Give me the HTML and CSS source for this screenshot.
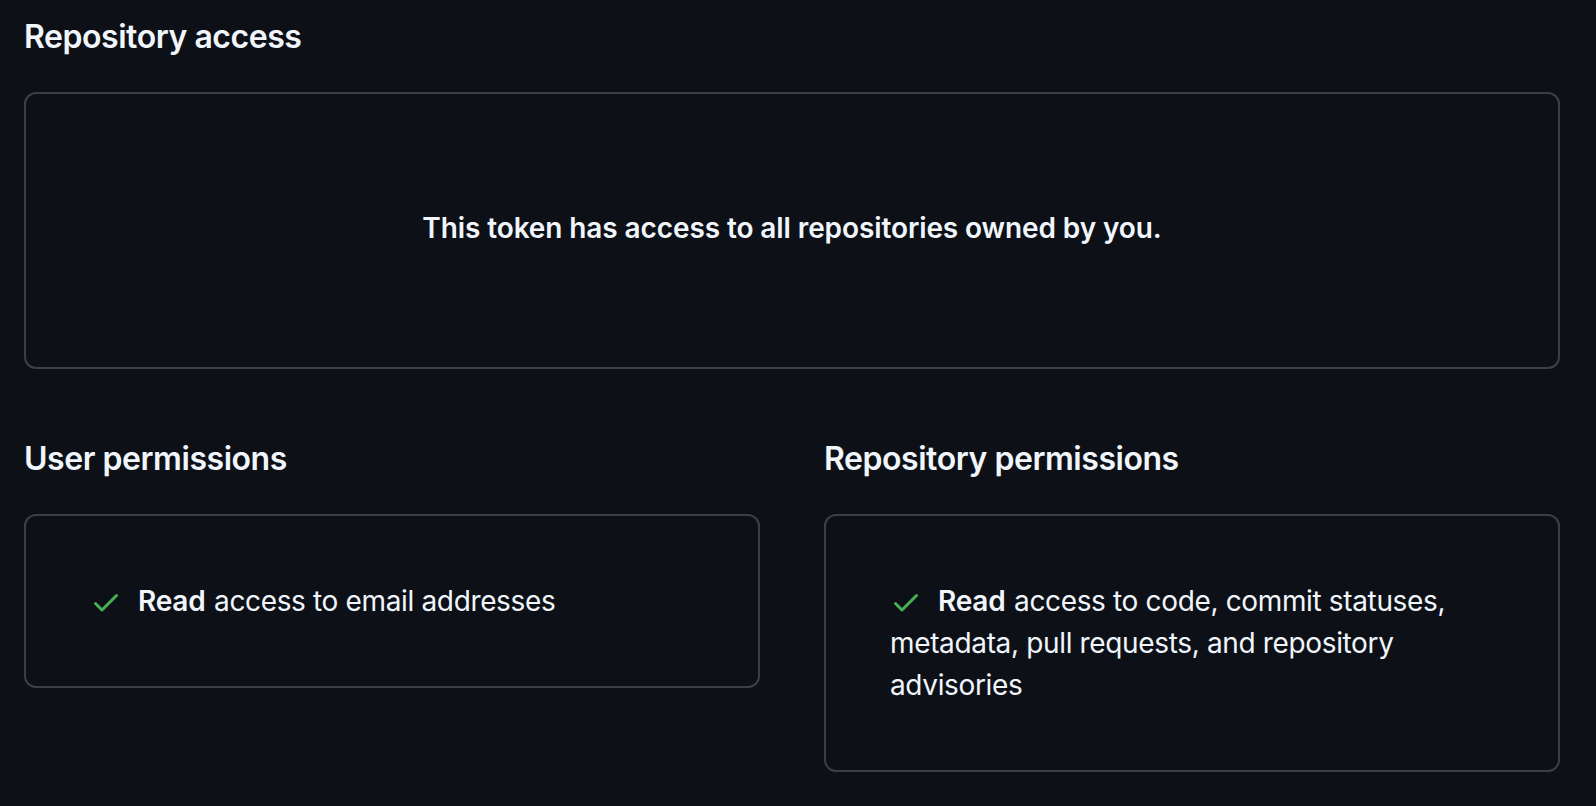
FILE: index.html
```html
<!DOCTYPE html>
<html lang="en">
<head>
<meta charset="utf-8">
<title>Token access</title>
<link rel="stylesheet" href="styles.css">
</head>
<body>
<main class="page">
  <section class="section">
    <h2 class="heading">Repository access</h2>
    <div class="box box-center">
      <p class="notice">This token has access to all repositories owned by you.</p>
    </div>
  </section>
  <div class="columns">
    <section class="section">
      <h2 class="heading">User permissions</h2>
      <div class="box">
        <p class="perm"><svg class="check" viewBox="0 0 16 16" width="32" height="32" aria-hidden="true"><path d="M13.78 4.22a.75.75 0 0 1 0 1.06l-7.25 7.25a.75.75 0 0 1-1.06 0L2.22 9.28a.751.751 0 0 1 .018-1.042.751.751 0 0 1 1.042-.018L6 10.94l6.72-6.72a.75.75 0 0 1 1.06 0Z"/></svg><strong>Read</strong> access to email addresses</p>
      </div>
    </section>
    <section class="section">
      <h2 class="heading">Repository permissions</h2>
      <div class="box">
        <p class="perm"><svg class="check" viewBox="0 0 16 16" width="32" height="32" aria-hidden="true"><path d="M13.78 4.22a.75.75 0 0 1 0 1.06l-7.25 7.25a.75.75 0 0 1-1.06 0L2.22 9.28a.751.751 0 0 1 .018-1.042.751.751 0 0 1 1.042-.018L6 10.94l6.72-6.72a.75.75 0 0 1 1.06 0Z"/></svg><strong>Read</strong> access to code, commit statuses, metadata, pull requests, and repository advisories</p>
      </div>
    </section>
  </div>
</main>
</body>
</html>
```
FILE: styles.css
```css
html, body {
  margin: 0;
  padding: 0;
  background: #0d1117;
}
body {
  color: #f0f6fc;
  font-family: Inter, "Liberation Sans", sans-serif;
  font-size: 28px;
  line-height: 42px;
}
.page {
  width: 1536px;
  padding: 12px 0 0 24px;
  display: flex;
  flex-direction: column;
  gap: 65px;
}
.section {
  display: flex;
  flex-direction: column;
  gap: 31px;
}
.heading {
  margin: 0;
  padding-top: 1px;
  font-size: 32px;
  line-height: 48px;
  font-weight: 600;
  letter-spacing: -0.45px;
}
.box {
  border: 2px solid #3a4048;
  border-radius: 12px;
  padding: 64px;
}
.box-center {
  padding: 113px 64px 118px;
  text-align: center;
}
.notice {
  margin: 0;
  font-weight: 600;
  letter-spacing: -0.1px;
}
.columns {
  display: grid;
  grid-template-columns: 1fr 1fr;
  gap: 64px;
}
.perm {
  margin: 0;
  letter-spacing: -0.35px;
}
.perm strong {
  font-weight: 600;
  letter-spacing: -0.2px;
  margin-right: 1px;
}
.check {
  fill: #46b14f;
  vertical-align: -7px;
  margin-right: 16px;
}
```
